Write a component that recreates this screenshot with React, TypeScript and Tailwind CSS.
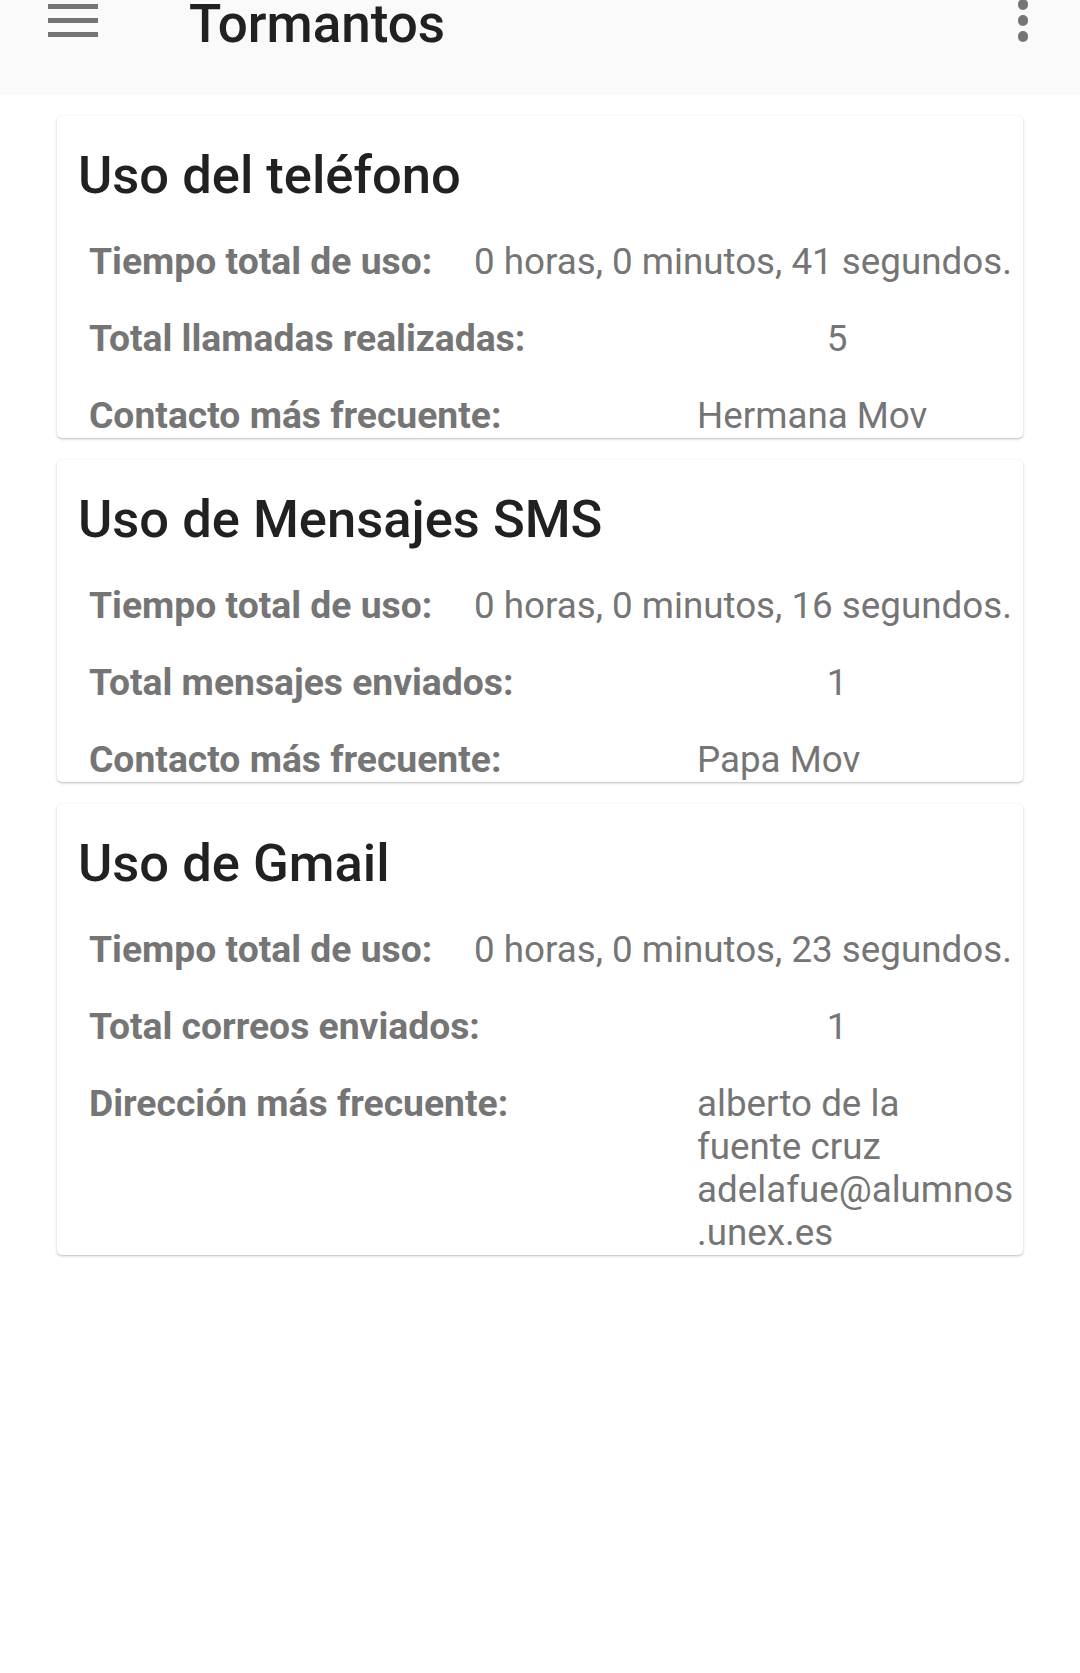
import React from "react";

const Label = ({ children, w }: { children: React.ReactNode; w: string }) => (
  <div className={`${w} shrink-0 font-bold text-[37.25px] text-[#757575] whitespace-nowrap`}>{children}</div>
);

function Card({
  title,
  rows,
}: {
  title: string;
  rows: React.ReactNode;
}) {
  return (
    <div className="bg-white rounded-[5px] shadow-[0_1px_3px_rgba(0,0,0,0.22),0_1px_1px_rgba(0,0,0,0.06)] pt-[32px] pb-[1px]">
      <h2 className="pl-[21px] text-[52.5px] leading-[54px] text-[#212121] font-medium">{title}</h2>
      <div className="mt-[38px] pl-[32px] flex flex-col gap-[34px] text-[36.75px] leading-[43px]">{rows}</div>
    </div>
  );
}

function TimeRow({ value }: { value: string }) {
  return (
    <div className="flex">
      <Label w="w-[385px]">Tiempo total de uso:</Label>
      <div className="text-[#757575] whitespace-nowrap">{value}</div>
    </div>
  );
}

function NumRow({ label, value }: { label: string; value: string }) {
  return (
    <div className="flex">
      <Label w="w-[608px]">{label}</Label>
      <div className="w-[280px] text-center text-[#757575]">{value}</div>
    </div>
  );
}

function TextRow({ label, lines }: { label: string; lines: string[] }) {
  return (
    <div className="flex">
      <Label w="w-[608px]">{label}</Label>
      <div className="text-[#757575] whitespace-nowrap">
        {lines.map((l, i) => (
          <span key={i} className="block">
            {l}
          </span>
        ))}
      </div>
    </div>
  );
}

export default function App() {
  return (
    <div
      className="w-[1080px] min-h-[1673px] bg-white"
      style={{ fontFamily: "Roboto, 'Noto Sans', sans-serif" }}
    >
      <header className="h-[95px] bg-[#fafafa] flex items-start">
        <div className="ml-[48px] mt-[4px] w-[50px] flex flex-col gap-[9.5px]">
          <span className="block h-[4.5px] bg-[#757575]" />
          <span className="block h-[4.5px] bg-[#757575]" />
          <span className="block h-[4.5px] bg-[#757575]" />
        </div>
        <h1 className="ml-[91px] mt-[1px] text-[53px] leading-[46px] font-medium text-[#212121]">Tormantos</h1>
        <div className="ml-auto mr-[52px] mt-[-1px] flex flex-col gap-[5.5px]">
          <span className="block w-[10.5px] h-[10.5px] rounded-full bg-[#757575]" />
          <span className="block w-[10.5px] h-[10.5px] rounded-full bg-[#757575]" />
          <span className="block w-[10.5px] h-[10.5px] rounded-full bg-[#757575]" />
        </div>
      </header>
      <main className="px-[57px] pt-[21px] flex flex-col gap-[22px]">
        <Card
          title="Uso del teléfono"
          rows={
            <>
              <TimeRow value="0 horas, 0 minutos, 41 segundos." />
              <NumRow label="Total llamadas realizadas:" value="5" />
              <TextRow label="Contacto más frecuente:" lines={["Hermana Mov"]} />
            </>
          }
        />
        <Card
          title="Uso de Mensajes SMS"
          rows={
            <>
              <TimeRow value="0 horas, 0 minutos, 16 segundos." />
              <NumRow label="Total mensajes enviados:" value="1" />
              <TextRow label="Contacto más frecuente:" lines={["Papa Mov"]} />
            </>
          }
        />
        <Card
          title="Uso de Gmail"
          rows={
            <>
              <TimeRow value="0 horas, 0 minutos, 23 segundos." />
              <NumRow label="Total correos enviados:" value="1" />
              <TextRow
                label="Dirección más frecuente:"
                lines={["alberto de la", "fuente cruz", "adelafue@alumnos", ".unex.es"]}
              />
            </>
          }
        />
      </main>
    </div>
  );
}
